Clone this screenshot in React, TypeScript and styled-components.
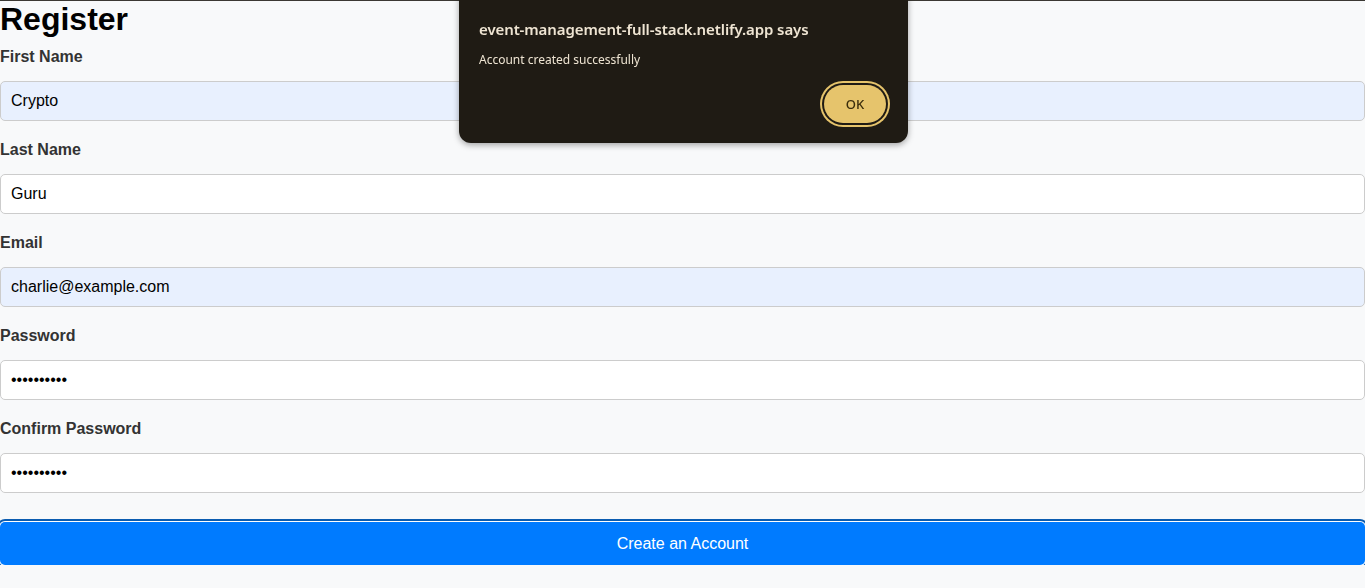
import React from "react";
import styled, { createGlobalStyle } from "styled-components";

const Global = createGlobalStyle`
  html, body { margin: 0; padding: 0; }
  body {
    background: #f8f9fa;
    font-family: "Liberation Sans", Arial, sans-serif;
    border-top: 1px solid #3b3833;
    overflow: hidden;
  }
  * { box-sizing: border-box; }
`;

const Page = styled.div`
  width: 1365px;
  display: flex;
  flex-direction: column;
`;

const Title = styled.h1`
  margin: 0;
  font-size: 32px;
  line-height: 37px;
  font-weight: 700;
  color: #000;
`;

const Form = styled.form`
  display: flex;
  flex-direction: column;
  gap: 20px;
  margin-top: 10px;
`;

const Field = styled.div`
  display: flex;
  flex-direction: column;
  gap: 15px;
`;

const Label = styled.label`
  font-size: 16px;
  line-height: 18px;
  font-weight: 700;
  color: #333;
`;

const Input = styled.input<{ $filled?: boolean }>`
  width: 100%;
  height: 40px;
  padding: 0 10px;
  border: 1px solid #ccc;
  border-radius: 5px;
  font-family: "Liberation Sans", Arial, sans-serif;
  font-size: 16px;
  color: #000;
  background: ${(p) => (p.$filled ? "#e8f0fe" : "#fff")};
  outline: none;
`;

const Button = styled.button`
  margin-top: 9px;
  height: 43px;
  width: 100%;
  border: none;
  border-radius: 5px;
  background: #007bff;
  color: #fff;
  font-family: "Liberation Sans", Arial, sans-serif;
  font-size: 16px;
  box-shadow: 0 0 0 1px #fff, 0 0 0 3px #0b5cb0;
`;

const Dialog = styled.div`
  position: fixed;
  left: 459px;
  top: -12px;
  width: 449px;
  height: 155px;
  background: #1f1b14;
  border-radius: 12px;
  box-shadow: 0 2px 6px rgba(0, 0, 0, 0.35);
  padding: 30px 20px 0 20px;
  display: flex;
  flex-direction: column;
  font-family: "Noto Sans", "Open Sans", sans-serif;
`;

const DialogTitle = styled.div`
  font-size: 15px;
  font-weight: 600;
  color: #eee4d2;
  line-height: 22px;
  letter-spacing: -0.1px;
`;

const DialogMessage = styled.div`
  margin-top: 12px;
  font-size: 12px;
  color: #eee4d2;
  line-height: 16px;
`;

const Actions = styled.div`
  margin-top: 17px;
  display: flex;
  justify-content: flex-end;
  padding-right: 2px;
`;

const OkButton = styled.button`
  width: 62px;
  height: 38px;
  border-radius: 19px;
  border: none;
  background: #e6c46c;
  color: #3a2d0c;
  font-family: "Noto Sans", "Open Sans", sans-serif;
  font-size: 13px;
  font-weight: 500;
  box-shadow: 0 0 0 2px #1f1b14, 0 0 0 4px #e6c46c;
`;

const fields = [
  { label: "First Name", type: "text", value: "Crypto", filled: true },
  { label: "Last Name", type: "text", value: "Guru", filled: false },
  { label: "Email", type: "email", value: "charlie@example.com", filled: true },
  { label: "Password", type: "password", value: "1234567890", filled: false },
  { label: "Confirm Password", type: "password", value: "1234567890", filled: false },
];

export default function App() {
  return (
    <>
      <Global />
      <Page>
        <Title>Register</Title>
        <Form onSubmit={(e) => e.preventDefault()}>
          {fields.map((f) => (
            <Field key={f.label}>
              <Label>{f.label}</Label>
              <Input type={f.type} defaultValue={f.value} $filled={f.filled} readOnly />
            </Field>
          ))}
          <Button type="submit">Create an Account</Button>
        </Form>
      </Page>
      <Dialog>
        <DialogTitle>event-management-full-stack.netlify.app says</DialogTitle>
        <DialogMessage>Account created successfully</DialogMessage>
        <Actions>
          <OkButton>OK</OkButton>
        </Actions>
      </Dialog>
    </>
  );
}
